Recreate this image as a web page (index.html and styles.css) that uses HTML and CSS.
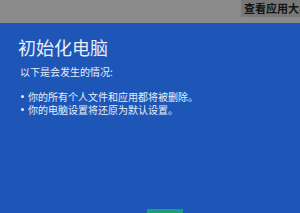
FILE: index.html
```html
<!DOCTYPE html>
<html lang="zh-CN">
<head>
<meta charset="utf-8">
<link rel="stylesheet" href="styles.css">
</head>
<body>
<div class="topbar">
  <div class="btn">查看应用大小</div>
</div>
<div class="main">
  <h1 class="title">初始化电脑</h1>
  <p class="intro">以下是会发生的情况:</p>
  <ul class="list">
    <li>你的所有个人文件和应用都将被删除。</li>
    <li>你的电脑设置将还原为默认设置。</li>
  </ul>
  <div class="footer">
    <div class="green"></div>
  </div>
</div>
</body>
</html>
```
FILE: styles.css
```css
html, body {
  margin: 0;
  padding: 0;
  width: 300px;
  height: 213px;
  overflow: hidden;
  font-family: "Noto Sans CJK SC", "Liberation Sans", sans-serif;
}
.topbar {
  height: 23px;
  background: #8a8a8a;
  display: flex;
  justify-content: flex-end;
  align-items: flex-start;
}
.btn {
  width: 56px;
  height: 17px;
  background: #787878;
  color: #141414;
  font-size: 11px;
  font-weight: bold;
  line-height: 17px;
  padding-left: 3px;
  white-space: nowrap;
  overflow: hidden;
}
.main {
  height: 190px;
  background: #1d56b7;
  color: #e6eefb;
  display: flex;
  flex-direction: column;
  padding: 0 0 0 18px;
  box-sizing: border-box;
}
.title {
  margin: 12px 0 0 0;
  font-size: 18px;
  font-weight: normal;
  line-height: 24px;
}
.intro {
  margin: 6px 0 0 2px;
  font-size: 10px;
  line-height: 14px;
}
.list {
  margin: 11px 0 0 3px;
  padding: 0;
  list-style: none;
  font-size: 10px;
  line-height: 13px;
}
.list li {
  display: flex;
  align-items: center;
  gap: 4px;
  height: 13px;
}
.list li::before {
  content: "";
  width: 3px;
  height: 3px;
  border-radius: 50%;
  background: #e6eefb;
}
.footer {
  margin-top: auto;
  height: 4px;
  display: flex;
}
.green {
  margin-left: 129px;
  width: 36px;
  height: 4px;
  background: #16a07c;
}
```
